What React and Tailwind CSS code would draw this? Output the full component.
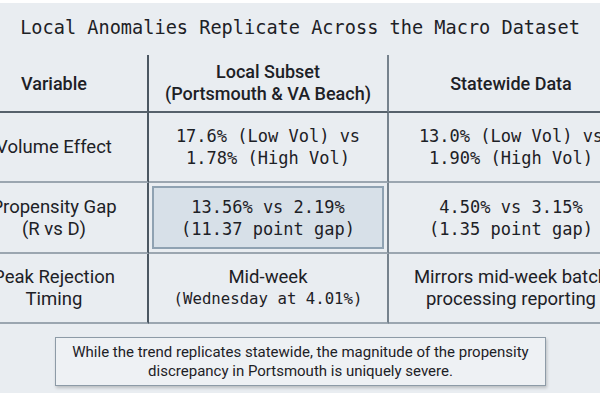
import React from "react";

const mono = "font-['DejaVu_Sans_Mono','Liberation_Mono',monospace]";
const sans = "font-['Roboto','Liberation_Sans',sans-serif]";

const rows = [
    {
        h: "h-[70px]",
        label: ["Volume Effect"],
        local: { lines: ["17.6% (Low Vol) vs", "1.78% (High Vol)"], font: "mono" },
        state: { lines: ["13.0% (Low Vol) vs", "1.90% (High Vol)"], font: "mono" },
    },
    {
        h: "h-[71px]",
        label: ["Propensity Gap", "(R vs D)"],
        local: { lines: ["13.56% vs 2.19%", "(11.37 point gap)"], font: "mono", highlight: true },
        state: { lines: ["4.50% vs 3.15%", "(1.35 point gap)"], font: "mono" },
    },
    {
        h: "h-[70px]",
        label: ["Peak Rejection", "Timing"],
        local: { lines: ["Mid-week", "(Wednesday at 4.01%)"], font: "mixed" },
        state: { lines: ["Mirrors mid-week batch", "processing reporting"], font: "sans" },
    },
];

function Lines({ cell }) {
    return (
        <div className="flex flex-col items-center leading-[22px] whitespace-nowrap">
            {cell.lines.map((line, i) => {
                let cls = `${sans} text-[18.5px]`;
                if (cell.font === "mono") cls = `${mono} text-[17px]`;
                if (cell.font === "mixed" && i > 0) cls = `${mono} text-[15.7px]`;
                return (
                    <span key={i} className={cls}>
                        {line}
                    </span>
                );
            })}
        </div>
    );
}

export default function App() {
    return (
        <div className="w-[600px] h-[400px] overflow-hidden bg-white">
            <div className="mt-[3px] h-[390px] bg-[#e9edf1] text-[#1d2126] flex flex-col">
                {/* title */}
                <div className={`${mono} text-[18.6px] h-[52px] flex items-center justify-center whitespace-nowrap pb-[2px]`}>
                    Local Anomalies Replicate Across the Macro Dataset
                </div>

                {/* table */}
                <div className="ml-[-39px] w-[700px] grid grid-cols-[188px_240px_244px_1fr]">
                    {/* header */}
                    <div className={`${sans} h-[58px] flex items-center justify-center text-[18px] font-medium whitespace-nowrap border-b-2 border-[#56616b] border-r-2 border-r-[#4b5762]`}>
                        Variable
                    </div>
                    <div className={`${sans} h-[58px] flex flex-col items-center justify-center text-[18px] font-medium leading-[22px] whitespace-nowrap border-b-2 border-[#56616b] border-r-2 border-r-[#76828d]`}>
                        <span>Local Subset</span>
                        <span>(Portsmouth &amp; VA Beach)</span>
                    </div>
                    <div className={`${sans} h-[58px] flex items-center justify-center text-[18px] font-medium whitespace-nowrap border-b-2 border-[#56616b]`}>
                        Statewide Data
                    </div>
                    <div className="h-[58px] border-b-2 border-[#56616b]" />

                    {rows.map((row, r) => (
                        <React.Fragment key={r}>
                            <div className={`${sans} ${row.h} flex flex-col items-center justify-center text-[18.5px] leading-[22px] whitespace-nowrap border-b-2 border-[#9ba6b0] border-r-2 border-r-[#4b5762]`}>
                                {row.label.map((l) => (
                                    <span key={l}>{l}</span>
                                ))}
                            </div>
                            <div className={`${row.h} border-b-2 border-[#9ba6b0] border-r-2 border-r-[#76828d] flex`}>
                                {row.local.highlight ? (
                                    <div className="mx-[3px] my-[3px] flex-1 flex items-center justify-center bg-[#d7e0e8] border-2 border-[#8fa2b2]">
                                        <Lines cell={row.local} />
                                    </div>
                                ) : (
                                    <div className="flex-1 flex items-center justify-center">
                                        <Lines cell={row.local} />
                                    </div>
                                )}
                            </div>
                            <div className={`${row.h} border-b-2 border-[#9ba6b0] flex items-center justify-center`}>
                                <Lines cell={row.state} />
                            </div>
                            <div className={`${row.h} border-b-2 border-[#9ba6b0]`} />
                        </React.Fragment>
                    ))}
                </div>

                {/* takeaway */}
                <div className="pl-[55px] pt-[13px]">
                    <div className={`${sans} w-[491px] h-[49px] flex flex-col items-center justify-center text-[15px] leading-[19px] whitespace-nowrap bg-[#eef1f4] border border-[#8d9ba7] shadow-[1px_2px_3px_rgba(0,0,0,0.2)]`}>
                        <span>While the trend replicates statewide, the magnitude of the propensity</span>
                        <span>discrepancy in Portsmouth is uniquely severe.</span>
                    </div>
                </div>
            </div>
        </div>
    );
}
